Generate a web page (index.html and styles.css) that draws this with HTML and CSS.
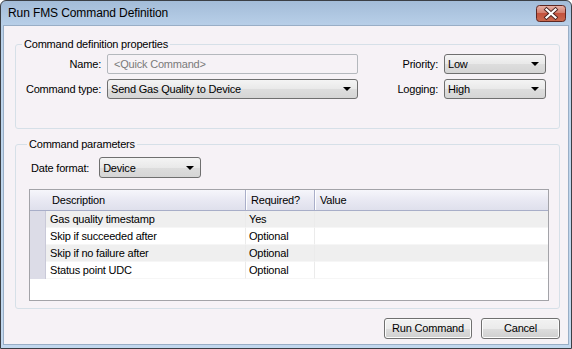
FILE: index.html
```html
<!DOCTYPE html>
<html lang="en">
  <head>
    <meta charset="UTF-8" />
    <title>Run FMS Command Definition</title>
    <link rel="stylesheet" href="styles.css">
  </head>
  <body>
    <div class="window">
      <div class="titlebar">
        <span class="title">Run FMS Command Definition</span>
        <div class="close-btn">
          <svg width="30" height="17" viewBox="0 0 30 17">
            <defs>
              <linearGradient id="red" x1="0" y1="0" x2="0" y2="1">
                <stop offset="0" stop-color="#e8b4ab" />
                <stop offset="0.45" stop-color="#d4806f" />
                <stop offset="0.5" stop-color="#c4523d" />
                <stop offset="1" stop-color="#c96a4f" />
              </linearGradient>
            </defs>
            <rect x="0.5" y="0.5" width="29" height="16" rx="3" fill="url(#red)" stroke="#5d2722" />
            <path d="M10.5 4.5 L19.5 12.5 M19.5 4.5 L10.5 12.5" stroke="#4a2420" stroke-width="4" stroke-linecap="square" />
            <path d="M10.5 4.5 L19.5 12.5 M19.5 4.5 L10.5 12.5" stroke="#ffffff" stroke-width="2.2" stroke-linecap="square" />
          </svg>
        </div>
      </div>

      <div class="client">
        <fieldset class="group props">
          <legend>Command definition properties</legend>
          <div class="props-grid">
            <label class="lbl">Name:</label>
            <div class="textbox">&lt;Quick Command&gt;</div>
            <span></span>
            <label class="lbl">Priority:</label>
            <div class="combo"><span>Low</span><i class="arrow"></i></div>

            <label class="lbl">Command type:</label>
            <div class="combo"><span>Send Gas Quality to Device</span><i class="arrow"></i></div>
            <span></span>
            <label class="lbl">Logging:</label>
            <div class="combo"><span>High</span><i class="arrow"></i></div>
          </div>
        </fieldset>

        <fieldset class="group params">
          <legend>Command parameters</legend>
          <div class="date-row">
            <label class="lbl">Date format:</label>
            <div class="combo date-combo"><span>Device</span><i class="arrow"></i></div>
          </div>

          <div class="grid">
            <div class="grid-head">
              <div class="head-cell">Description</div>
              <div class="head-cell">Required?</div>
              <div class="head-cell">Value</div>
            </div>
            <div class="grid-row odd">
              <div class="row-head"></div>
              <div class="cell">Gas quality timestamp</div>
              <div class="cell">Yes</div>
              <div class="cell"></div>
            </div>
            <div class="grid-row">
              <div class="row-head"></div>
              <div class="cell">Skip if succeeded after</div>
              <div class="cell">Optional</div>
              <div class="cell"></div>
            </div>
            <div class="grid-row odd">
              <div class="row-head"></div>
              <div class="cell">Skip if no failure after</div>
              <div class="cell">Optional</div>
              <div class="cell"></div>
            </div>
            <div class="grid-row">
              <div class="row-head"></div>
              <div class="cell">Status point UDC</div>
              <div class="cell">Optional</div>
              <div class="cell"></div>
            </div>
          </div>
        </fieldset>

        <div class="buttons">
          <div class="btn run">Run Command</div>
          <div class="btn cancel">Cancel</div>
        </div>
      </div>
    </div>
  </body>
</html>
```

FILE: styles.css
```css
* {
  box-sizing: border-box;
}

body {
  margin: 0;
  font-family: "Liberation Sans", Arial, sans-serif;
  font-size: 11px;
  letter-spacing: -0.2px;
  color: #000;
}

.window {
  width: 572px;
  height: 349px;
  border: 1px solid #3b3f45;
  border-radius: 6px 6px 0 0;
  background: linear-gradient(#a3bcd8, #b8cfe8 24px, #bcd3ea 60px, #c2d8ee);
  display: flex;
  flex-flow: column;
  overflow: hidden;
}

.titlebar {
  height: 24px;
  display: flex;
  align-items: flex-start;
  justify-content: space-between;
  padding: 0 5px 0 7px;
}

.title {
  font-size: 12px;
  line-height: 24px;
  letter-spacing: -0.1px;
  color: #000;
}

.close-btn {
  margin-top: 4px;
  height: 17px;
}

.close-btn svg {
  display: block;
}

.client {
  flex: 1;
  margin: 0 2px 3px 2px;
  border: 1px solid #99aec6;
  background-color: #f6f2f6;
  padding: 12px 8px 0 11px;
  display: flex;
  flex-flow: column;
}

.group {
  margin: 0;
  border: 1px solid #d6e0e8;
  border-radius: 3px;
  min-width: 0;
}

.group legend {
  padding: 0 2px;
  margin-left: -2px;
  line-height: 13px;
  height: 13px;
}

.props {
  padding: 3px 13px 29px 8px;
}

.props-grid {
  display: grid;
  grid-template-columns: 77px 251px 1fr auto 102px;
  grid-auto-rows: 20px;
  column-gap: 6px;
  row-gap: 5px;
  align-items: center;
}

.lbl {
  text-align: right;
  white-space: nowrap;
}

.textbox {
  height: 20px;
  border: 1px solid #b4b8bd;
  border-radius: 2px;
  padding-left: 6px;
  line-height: 18px;
  color: #7a7a7a;
}

.combo {
  height: 20px;
  border: 1px solid #6f6f6f;
  border-radius: 3px;
  background: linear-gradient(#f4f4f4, #e9e9e9 50%, #dddddd 52%, #d5d5d5);
  display: flex;
  align-items: center;
  justify-content: space-between;
  padding: 0 6px 0 3px;
}

.arrow {
  width: 0;
  height: 0;
  border-left: 4px solid transparent;
  border-right: 4px solid transparent;
  border-top: 4px solid #000;
}

.params {
  margin-top: 9px;
  padding: 6px 10px 7px 13px;
}

.date-row {
  display: flex;
  align-items: center;
  gap: 10px;
  padding-left: 2px;
}

.date-combo {
  width: 102px;
  height: 21px;
}

.grid {
  margin-top: 11px;
  height: 112px;
  border: 1px solid #a3a3a8;
  background-color: #fff;
}

.grid-head {
  display: grid;
  grid-template-columns: 216px 69px 1fr;
  height: 21px;
  border-bottom: 1px solid #a8aec8;
  background: linear-gradient(#f6f6fb, #e9e9f3 50%, #dfe0ec);
}

.head-cell {
  line-height: 20px;
  padding-left: 5px;
  border-right: 1px solid #a9aec9;
  box-shadow: 1px 0 0 #ffffff;
}

.head-cell:first-child {
  padding-left: 22px;
}

.head-cell:last-child {
  border-right: none;
  box-shadow: none;
}

.grid-row {
  display: grid;
  grid-template-columns: 16px 200px 69px 1fr;
  height: 17px;
}

.grid-row.odd .cell {
  background-color: #efefef;
}

.row-head {
  background-color: #dcdce7;
  border-right: 1px solid #c9c9d8;
}

.cell {
  line-height: 16px;
  padding-left: 4px;
  border-bottom: 1px solid #f6f6f6;
  border-right: 1px solid #ebebeb;
  white-space: nowrap;
}

.cell:nth-child(3) {
  padding-left: 3px;
}

.cell:last-child {
  border-right: none;
}

.buttons {
  margin-top: 9px;
  display: flex;
  justify-content: flex-end;
  gap: 9px;
}

.btn {
  height: 21px;
  border: 1px solid #707070;
  border-radius: 3px;
  background: linear-gradient(#f2f2f2, #ebebeb 50%, #dddddd 52%, #cfcfcf);
  box-shadow: inset 0 0 0 1px #fcfcfc;
  text-align: center;
  line-height: 19px;
}

.run {
  width: 88px;
}

.cancel {
  width: 79px;
}
```
